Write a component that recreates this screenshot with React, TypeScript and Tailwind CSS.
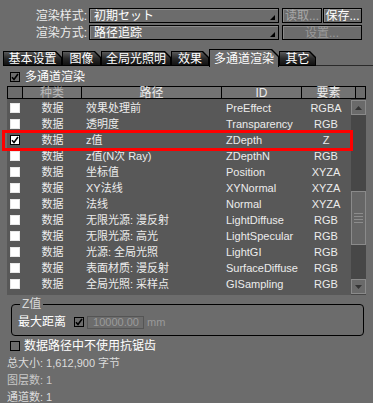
import React from 'react';

const rows = [
  { path: '效果处理前', id: 'PreEffect', el: 'RGBA', on: false },
  { path: '透明度', id: 'Transparency', el: 'RGB', on: false },
  { path: 'z值', id: 'ZDepth', el: 'Z', on: true },
  { path: 'z值(N次 Ray)', id: 'ZDepthN', el: 'RGB', on: false },
  { path: '坐标值', id: 'Position', el: 'XYZA', on: false },
  { path: 'XY法线', id: 'XYNormal', el: 'XYZA', on: false },
  { path: '法线', id: 'Normal', el: 'XYZA', on: false },
  { path: '无限光源: 漫反射', id: 'LightDiffuse', el: 'RGB', on: false },
  { path: '无限光源: 高光', id: 'LightSpecular', el: 'RGB', on: false },
  { path: '光源: 全局光照', id: 'LightGI', el: 'RGB', on: false },
  { path: '表面材质: 漫反射', id: 'SurfaceDiffuse', el: 'RGB', on: false },
  { path: '全局光照: 采样点', id: 'GISampling', el: 'RGB', on: false },
];

const tabs = [
  { label: '基本设置', w: 'w-[59px]' },
  { label: '图像', w: 'w-[39px]' },
  { label: '全局光照明', w: 'w-[70px]' },
  { label: '效果', w: 'w-[38px]' },
  { label: '多通道渲染', w: 'w-[70px]', active: true },
  { label: '其它', w: 'w-[37px]' },
];

// small tick used by the checkboxes
const Tick = () => (
  <svg width="8" height="8" viewBox="0 0 8 8" className="block">
    <path d="M1 4.2 L3 6.5 L7 1" stroke="#000" strokeWidth="1.6" fill="none" />
  </svg>
);

const WhiteBox = ({ on }: { on: boolean }) => (
  <div
    className={`w-[10px] h-[10px] bg-white flex items-center justify-center ${
      on ? 'border border-black' : 'border border-[#e8e8e8]'
    }`}
  >
    {on && <Tick />}
  </div>
);

const GrayBox = ({ on }: { on: boolean }) => (
  <div className="w-[10px] h-[10px] border border-black bg-[#6c6c6c] flex items-center justify-center">
    {on && <Tick />}
  </div>
);

const Dropdown = ({ text }: { text: string }) => (
  <div className="w-[190px] h-[15px] border border-black bg-[#6c6c6c] shadow-[inset_1px_1px_0_#8a8a8a] flex items-center pl-[4px] relative">
    <span className="text-[12px] leading-none text-white">{text}</span>
    <svg width="5" height="5" viewBox="0 0 5 5" className="absolute right-[3px] bottom-[2px]">
      <polygon points="5,0 5,5 0,5" fill="#000" />
    </svg>
  </div>
);

const Btn = ({ text, w, dim }: { text: string; w: string; dim: string }) => (
  <div
    className={`${w} h-[15px] border border-black bg-[#6c6c6c] shadow-[inset_1px_1px_0_#8a8a8a] flex items-center justify-center text-[12px] leading-none ${dim}`}
  >
    {text}
  </div>
);

export default function App() {
  return (
    <div className="w-[373px] h-[403px] bg-[#6c6c6c] text-[#ececec] overflow-hidden relative font-['Liberation_Sans','Noto_Sans_CJK_SC',sans-serif]">
      {/* render style / method */}
      <div className="pt-[8px] flex flex-col gap-[2px]">
        <div className="flex items-center">
          <div className="w-[89px] pr-[2px] text-right text-[12px] leading-none">渲染样式:</div>
          <Dropdown text="初期セット" />
          <div className="ml-[3px] flex gap-[1px]">
            <Btn text="读取..." w="w-[40px]" dim="text-[#a8a8a8]" />
            <Btn text="保存..." w="w-[39px]" dim="text-white" />
          </div>
        </div>
        <div className="flex items-center">
          <div className="w-[89px] pr-[2px] text-right text-[12px] leading-none">渲染方式:</div>
          <Dropdown text="路径追踪" />
          <div className="ml-[3px]">
            <Btn text="设置..." w="w-[80px]" dim="text-[#9a9a9a]" />
          </div>
        </div>
      </div>

      {/* tabs */}
      <div className="mt-[10px] flex items-end h-[17px] pl-[3px]">
        {tabs.map((t) =>
          t.active ? (
            <div
              key={t.label}
              className={`${t.w} h-[18px] bg-black p-[1px] pb-0 [clip-path:polygon(0_0,calc(100%-7px)_0,100%_7px,100%_100%,0_100%)]`}
            >
              <div className="w-full h-full bg-[#6c6c6c] flex items-center justify-center text-[12px] leading-none text-white [clip-path:polygon(0_0,calc(100%-7px)_0,100%_7px,100%_100%,0_100%)]">
                {t.label}
              </div>
            </div>
          ) : (
            <div
              key={t.label}
              className={`${t.w} h-[15px] bg-black p-[1px] mb-[1px] [clip-path:polygon(0_0,calc(100%-6px)_0,100%_6px,100%_100%,0_100%)]`}
            >
              <div className="w-full h-full bg-gradient-to-b from-[#5a5a5a] via-[#2a2a2a] to-[#111] flex items-center justify-center text-[12px] leading-none text-white [clip-path:polygon(0_0,calc(100%-6px)_0,100%_6px,100%_100%,0_100%)]">
                {t.label}
              </div>
            </div>
          )
        )}
        <div className="flex-1 border-b border-[#2a2a2a] mb-[1px]" />
      </div>

      {/* multipass toggle */}
      <div className="mt-[4px] ml-[10px] flex items-center gap-[5px] h-[12px]">
        <GrayBox on />
        <span className="text-[12px] leading-none text-white">多通道渲染</span>
      </div>

      {/* table header */}
      <div className="mt-[3px] ml-[7px] flex h-[13px] text-[12px] leading-none">
        <div className="w-[16px] border border-black bg-[#6c6c6c]" />
        <div className="w-[59px] border border-l-0 border-black bg-[#737373] flex items-center justify-center text-[#b8b8b8]">种类</div>
        <div className="w-[140px] border border-l-0 border-black bg-[#737373] flex items-center justify-center">路径</div>
        <div className="w-[80px] border border-l-0 border-black bg-[#737373] flex items-center justify-center">ID</div>
        <div className="w-[54px] border border-l-0 border-black bg-[#737373] flex items-center justify-center">要素</div>
        <div className="w-[10px] border border-l-0 border-black bg-[#6c6c6c]" />
      </div>

      {/* table body */}
      <div className="ml-[7px] w-[359px] h-[196px] bg-[#585858] flex">
        <div className="flex-1 pt-[1px]">
          {rows.map((r) => (
            <div key={r.id} className="h-[16px] flex items-center text-[11px] leading-none">
              <div className="w-[16px] flex justify-center">
                <WhiteBox on={r.on} />
              </div>
              <div className="w-[59px] text-center">数据</div>
              <div className="w-[144px] pl-[4px]">{r.path}</div>
              <div className="w-[76px]">{r.id}</div>
              <div className="w-[48px] text-center">{r.el}</div>
            </div>
          ))}
        </div>
        {/* scrollbar */}
        <div className="w-[15px] bg-[#474747] flex flex-col pt-[1px] pb-[1px]">
          <div className="h-[15px] bg-[#6a6a6a] border border-[#8a8a8a] flex items-center justify-center">
            <svg width="7" height="4" viewBox="0 0 7 4"><polygon points="0,4 3.5,0 7,4" fill="#333" /></svg>
          </div>
          <div className="mt-[76px] h-[54px] bg-[#666] border border-[#8a8a8a] flex flex-col items-center justify-center gap-[2px]">
            <div className="w-[9px] h-[1px] bg-[#8c8c8c]" />
            <div className="w-[9px] h-[1px] bg-[#8c8c8c]" />
            <div className="w-[9px] h-[1px] bg-[#8c8c8c]" />
            <div className="w-[9px] h-[1px] bg-[#8c8c8c]" />
          </div>
          <div className="flex-1" />
          <div className="h-[15px] bg-[#6a6a6a] border border-[#8a8a8a] flex items-center justify-center">
            <svg width="7" height="4" viewBox="0 0 7 4"><polygon points="0,0 3.5,4 7,0" fill="#333" /></svg>
          </div>
        </div>
      </div>

      {/* highlight around the ZDepth row */}
      <div className="absolute left-[2px] top-[130px] w-[351px] h-[21px] border-[3px] border-[#ff0000] pointer-events-none" />

      {/* Z value group */}
      <fieldset className="mt-[3px] ml-[11px] w-[353px] h-[38px] border border-black rounded-[4px] px-[6px]">
        <legend className="ml-[2px] px-[2px] text-[12px] leading-none text-[#d8d8d8]">Z值</legend>
        <div className="flex items-center h-[20px] mt-[2px]">
          <span className="text-[12px] leading-none text-white w-[56px]">最大距离</span>
          <GrayBox on />
          <div className="ml-[3px] w-[57px] h-[13px] border border-[#555] flex items-center justify-end pr-[4px] text-[11px] leading-none text-[#9a9a9a]">
            10000.00
          </div>
          <span className="ml-[3px] text-[11px] leading-none text-[#9a9a9a]">mm</span>
        </div>
      </fieldset>

      {/* anti-alias toggle + stats */}
      <div className="mt-[4px] ml-[10px] flex items-center gap-[4px] h-[12px]">
        <GrayBox on={false} />
        <span className="text-[12px] leading-none text-white">数据路径中不使用抗锯齿</span>
      </div>
      <div className="ml-[7px] mt-[5px] flex flex-col gap-[5px] text-[11px] leading-[12px] text-[#dcdcdc]">
        <div>总大小: 1,612,900 字节</div>
        <div className="text-[#c8c8c8]">图层数: 1</div>
        <div>通道数: 1</div>
      </div>
    </div>
  );
}
